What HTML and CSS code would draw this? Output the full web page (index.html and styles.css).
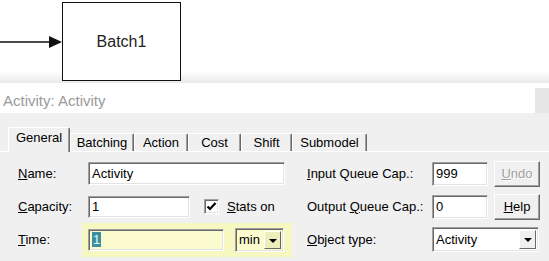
FILE: index.html
```html
<!DOCTYPE html>
<html lang="en">
<head>
  <meta charset="UTF-8">
  <title>Activity: Activity</title>
  <link rel="stylesheet" href="styles.css">
</head>
<body>
  <!-- model canvas behind the dialog -->
  <div class="canvas">
    <svg class="arrow" width="62" height="16" viewBox="0 0 62 16">
      <line x1="0" y1="8" x2="50" y2="8" stroke="#111" stroke-width="1.5"/>
      <polygon points="49,2 62,8 49,14" fill="#111"/>
    </svg>
    <div class="node">Batch1</div>
  </div>

  <div class="titlebar">
    <span class="title">Activity: Activity</span>
    <span class="close"></span>
  </div>

  <div class="dialog">
    <div class="tabs">
      <div class="tab active" style="width:62px">General</div>
      <div class="tab" style="width:64px">Batching</div>
      <div class="tab" style="width:54px">Action</div>
      <div class="tab" style="width:53px">Cost</div>
      <div class="tab" style="width:51px">Shift</div>
      <div class="tab" style="width:75px">Submodel</div>
    </div>

    <div class="page">
      <div class="row">
        <div class="left">
          <span class="label"><u>N</u>ame:</span>
          <span class="field name-field">Activity</span>
        </div>
        <span class="rlabel"><u>I</u>nput Queue Cap.:</span>
        <span class="field rfield">999</span>
        <span class="btn disabled"><u>U</u>ndo</span>
      </div>

      <div class="row">
        <div class="left">
          <span class="label"><u>C</u>apacity:</span>
          <span class="field cap-field">1</span>
          <span class="check">
            <svg width="11" height="11" viewBox="0 0 11 11"><path d="M1.5 5.5 L4 8 L9.5 2" fill="none" stroke="#000" stroke-width="2.2"/></svg>
          </span>
          <span class="check-label"><u>S</u>tats on</span>
        </div>
        <span class="rlabel">Output <u>Q</u>ueue Cap.:</span>
        <span class="field rfield">0</span>
        <span class="btn"><u>H</u>elp</span>
      </div>

      <div class="row">
        <div class="left">
          <span class="label short"><u>T</u>ime:</span>
          <div class="highlight">
            <span class="field time-field"><span class="sel">1</span></span>
            <span class="field combo unit">min<span class="drop"></span></span>
          </div>
        </div>
        <span class="rlabel"><u>O</u>bject type:</span>
        <span class="field combo type">Activity<span class="drop"></span></span>
      </div>
    </div>
  </div>
</body>
</html>
```

FILE: styles.css
```css
body {
  margin: 0;
  width: 549px;
  height: 261px;
  overflow: hidden;
  font-family: "Liberation Sans", Arial, sans-serif;
  font-size: 13px;
  color: #000;
  background: #f0f0f0;
}
.canvas {
  position: relative;
  height: 83px;
  background: linear-gradient(#fff 71px, #e9e9e9 83px);
}
.arrow {
  position: absolute;
  left: 0;
  top: 34px;
}
.node {
  position: absolute;
  left: 62px;
  top: 2px;
  width: 117px;
  height: 77px;
  border: 1.5px solid #111;
  background: #fff;
  display: flex;
  align-items: center;
  justify-content: center;
  font-size: 16px;
  color: #222;
}
.titlebar {
  height: 30px;
  background: #fff;
  display: flex;
  justify-content: space-between;
}
.title {
  font-size: 15px;
  color: #9a9a9a;
  padding: 9px 0 0 3px;
}
.close {
  width: 16px;
  height: 25px;
  margin-top: 5px;
  margin-right: -2px;
  background: #e6e6e6;
}
.dialog {
  padding-top: 14px;
}
.tabs {
  display: flex;
  align-items: flex-end;
  height: 24px;
  padding-left: 8px;
}
.tab {
  box-sizing: border-box;
  height: 18px;
  border-top: 1px solid #fff;
  border-left: 1px solid #fff;
  border-right: 1px solid #696969;
  box-shadow: inset -1px 0 #a0a0a0;
  border-radius: 2px 2px 0 0;
  text-align: center;
  line-height: 17px;
}
.tab.active {
  height: 25px;
  margin-bottom: -1px;
  background: #f0f0f0;
  line-height: 20px;
  position: relative;
}
.page {
  border-top: 1px solid #fff;
  padding: 5px 0 0 18px;
}
.row {
  display: flex;
  align-items: center;
  height: 33px;
}
.left {
  width: 289px;
  display: flex;
  align-items: center;
}
.label {
  width: 70px;
}
.label.short {
  width: 64px;
}
.rlabel {
  width: 125px;
}
.field {
  box-sizing: border-box;
  display: flex;
  align-items: center;
  height: 23px;
  padding-left: 3px;
  background: #fff;
  border-top: 1px solid #a0a0a0;
  border-left: 1px solid #a0a0a0;
  border-bottom: 1px solid #fff;
  border-right: 1px solid #fff;
  box-shadow: inset 1px 1px #696969, inset -1px -1px #e3e3e3;
}
.name-field {
  width: 197px;
}
.cap-field {
  width: 102px;
  height: 22px;
}
.rfield {
  width: 56px;
  height: 24px;
}
.check {
  box-sizing: border-box;
  width: 15px;
  height: 15px;
  margin-left: 14px;
  display: flex;
  align-items: center;
  justify-content: center;
  background: #fff;
  border-top: 1px solid #a0a0a0;
  border-left: 1px solid #a0a0a0;
  border-bottom: 1px solid #fff;
  border-right: 1px solid #fff;
  box-shadow: inset 1px 1px #696969, inset -1px -1px #e3e3e3;
}
.check-label {
  margin-left: 8px;
}
.btn {
  box-sizing: border-box;
  width: 46px;
  height: 26px;
  margin-left: 6px;
  display: flex;
  align-items: center;
  justify-content: center;
  border-top: 1px solid #fff;
  border-left: 1px solid #fff;
  border-bottom: 1px solid #696969;
  border-right: 1px solid #696969;
  box-shadow: inset -1px -1px #a0a0a0;
}
.btn.disabled {
  color: #a0a0a0;
  text-shadow: 1px 1px #fff;
}
.highlight {
  box-sizing: border-box;
  width: 210px;
  height: 34px;
  padding: 0 6px;
  display: flex;
  align-items: center;
  background: #f7f7c2;
}
.time-field {
  width: 136px;
  height: 22px;
  background: #fbfbcd;
}
.sel {
  background: #3d8e9e;
  color: #dff;
  padding: 0 1px;
  line-height: 15px;
}
.combo {
  position: relative;
  justify-content: flex-start;
}
.unit {
  width: 49px;
  height: 24px;
  margin-left: 11px;
  background: #fbfbcd;
}
.type {
  width: 107px;
  height: 25px;
}
.drop {
  position: absolute;
  right: 2px;
  top: 2px;
  bottom: 2px;
  width: 17px;
  box-sizing: border-box;
  background: #f0f0f0;
  border-top: 1px solid #fff;
  border-left: 1px solid #fff;
  border-bottom: 1px solid #696969;
  border-right: 1px solid #696969;
}
.drop::after {
  content: "";
  position: absolute;
  left: 4px;
  top: 7px;
  border-left: 4px solid transparent;
  border-right: 4px solid transparent;
  border-top: 4px solid #000;
}
.unit .drop {
  background: #eeeebd;
}
```
